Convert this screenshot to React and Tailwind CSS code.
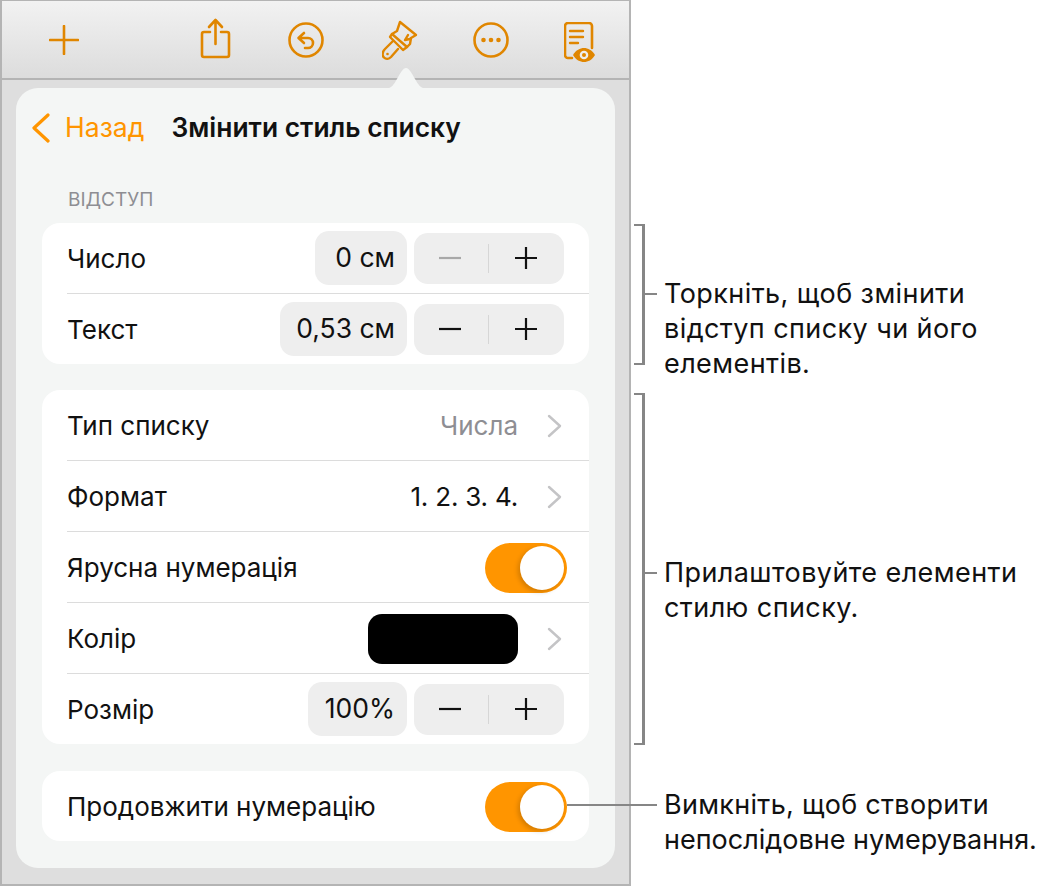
const ORANGE = "#e08600";

const Minus = ({ dim }) => (
  <svg className="mr-[2px]" width="24" height="24" viewBox="0 0 24 24">
    <path d="M1 12h22" stroke={dim ? "#a8a8a8" : "#111"} strokeWidth="2.2" fill="none" />
  </svg>
);

const Plus = () => (
  <svg className="mr-[2px]" width="24" height="24" viewBox="0 0 24 24">
    <path d="M1 12h22M12 1v22" stroke="#111" strokeWidth="2.2" fill="none" />
  </svg>
);

const Chevron = () => (
  <svg className="ml-[29px] mr-[2px] mt-[2px] shrink-0" width="15" height="24" viewBox="0 0 15 24">
    <path d="M2 2l11 10L2 22" stroke="#c4c4c6" strokeWidth="2.4" fill="none" strokeLinecap="round" strokeLinejoin="round" />
  </svg>
);

const Stepper = ({ dim }) => (
  <div className="w-[150px] h-[51px] rounded-[14px] bg-[#eeeeee] flex items-center">
    <div className="w-[75px] h-[29px] flex items-center justify-center border-r border-[#d6d6d6]">
      <Minus dim={dim} />
    </div>
    <div className="flex-1 flex items-center justify-center">
      <Plus />
    </div>
  </div>
);

const ValueBox = ({ width, children }) => (
  <div className={`${width} h-[54px] rounded-[14px] bg-[#eeeeee] flex items-center justify-end pr-3 mr-[7px] text-[26.5px] text-[#111]`}>
    {children}
  </div>
);

const Toggle = () => (
  <div className="relative w-[82px] h-[50px] -mr-[3px] mt-[2px] rounded-full bg-[#ff9500]">
    <div className="absolute right-[3px] top-[3px] w-[44px] h-[44px] rounded-full bg-white shadow-[-2px_2px_5px_rgba(0,0,0,0.18)]" />
  </div>
);

const Row = ({ label, last, children }) => (
  <div className={`ml-[25px] pr-[25px] flex items-center justify-between ${last ? "h-[70px]" : "h-[71px] border-b border-[#dcdcdc]"}`}>
    <span className="text-[26px] text-[#111]">{label}</span>
    <div className="flex items-center">{children}</div>
  </div>
);

const Card = ({ className = "", children }) => (
  <div className={`bg-white rounded-[18px] overflow-hidden ${className}`}>{children}</div>
);

const Callout = ({ height, bracket, tickTop, textTop, lines }) => (
  <div className={`flex items-start ${height}`}>
    <div className={`w-[11px] ${bracket} border-y-2 border-r-[3px] border-[#868686] shrink-0`} />
    <div className={`w-[12px] h-[2px] bg-[#868686] shrink-0 ${tickTop}`} />
    <div className={`ml-[7px] text-[27px] leading-[35px] tracking-[0.42px] text-[#111] whitespace-nowrap ${textTop}`}>
      {lines.map((l) => (
        <div key={l}>{l}</div>
      ))}
    </div>
  </div>
);

const Toolbar = () => (
  <div className="h-[79px] shrink-0 flex items-start border-b-2 border-[#b4b4b4] bg-gradient-to-b from-[#f2f2f2] to-[#dcdcdc]">
    <svg className="ml-[47px] mt-[24px]" width="30" height="30" viewBox="0 0 30 30">
      <path d="M1 15h28M15 1v28" stroke={ORANGE} strokeWidth="2.600" fill="none" strokeLinecap="round" />
    </svg>
    <svg className="ml-[121px] mt-[17px]" width="31" height="41" viewBox="0 0 31 41" fill="none" stroke={ORANGE} strokeWidth="2.600" strokeLinecap="round" strokeLinejoin="round">
      <path d="M10 14H4a2 2 0 0 0-2 2v21a2 2 0 0 0 2 2h23a2 2 0 0 0 2-2V16a2 2 0 0 0-2-2h-6" />
      <path d="M15.500 26V3M9 9l6.500-7 6.500 7" />
    </svg>
    <svg className="ml-[57px] mt-[21px]" width="36" height="36" viewBox="0 0 36 36" fill="none" stroke={ORANGE} strokeWidth="2.600" strokeLinecap="round" strokeLinejoin="round">
      <circle cx="18" cy="18" r="16.500" />
      <path d="M16 11l-5.500 5 5.500 5M11 16h9a5 5 0 0 1 0 10h-3" />
    </svg>
    <svg className="ml-[58px] mt-[19px]" width="38" height="42" viewBox="0 0 38 42" fill="none" stroke={ORANGE} strokeWidth="2.400" strokeLinecap="round" strokeLinejoin="round">
      <path d="M18 2L34 15L29 18L28 24L25 27L10 14L15 11Z" />
      <path d="M10 14L8 17L21 30L25 27" />
      <path d="M26 15L23 20L28 19" />
      <path d="M11 21L3 29C0 32 0 36 2 37.500C4 39.500 7 39 9 37L16 29" />
      <circle cx="5.500" cy="34" r="1.300" fill={ORANGE} stroke="none" />
    </svg>
    <svg className="ml-[53px] mt-[21px]" width="36" height="36" viewBox="0 0 36 36" fill="none">
      <circle cx="18" cy="18" r="16.500" stroke={ORANGE} strokeWidth="2.600" />
      <circle cx="10.500" cy="18" r="2.300" fill={ORANGE} />
      <circle cx="18" cy="18" r="2.300" fill={ORANGE} />
      <circle cx="25.500" cy="18" r="2.300" fill={ORANGE} />
    </svg>
    <svg className="ml-[55px] mt-[21px]" width="32" height="41" viewBox="0 0 32 41" fill="none">
      <path d="M8 36H4a3 3 0 0 1-3-3V4a3 3 0 0 1 3-3h21a3 3 0 0 1 3 3v22" stroke={ORANGE} strokeWidth="2.600" strokeLinecap="round" />
      <path d="M6 9h13M6 15h13M6 21h8" stroke={ORANGE} strokeWidth="2.400" strokeLinecap="round" />
      <path d="M9 33c3-5 7-7 11-7s8 2 11 7c-3 5-7 7-11 7s-8-2-11-7z" fill={ORANGE} />
      <circle cx="20" cy="33" r="4.300" fill="#eeeeee" />
      <circle cx="20" cy="33" r="2" fill={ORANGE} />
    </svg>
  </div>
);

const Popover = () => (
  <div className="relative mt-[8px] mx-[14px] h-[780px] rounded-[22px] bg-[#f4f6f5] px-[26px]">
    <svg className="absolute left-[367px] -top-[21px]" width="46" height="22" viewBox="0 0 46 22">
      <path d="M0 22C9 22 11 17 14 12C18 5 20 1 23 1C26 1 28 5 32 12C35 17 37 22 46 22Z" fill="#f4f6f5" />
    </svg>
    <div className="h-[80px] flex items-center">
      <svg className="-ml-[11px]" width="20" height="30" viewBox="0 0 20 30">
        <path d="M17 2L3 15l14 13" stroke="#ff9500" strokeWidth="3.200" fill="none" strokeLinecap="round" strokeLinejoin="round" />
      </svg>
      <span className="ml-[14px] text-[26.6px] text-[#ff9500]">Назад</span>
      <span className="ml-[27px] text-[26.4px] font-semibold text-[#111]">Змінити стиль списку</span>
    </div>
    <div className="h-[55px] pt-[21px] pl-[26px] text-[19px] leading-[22px] text-[#8e8e93]">ВІДСТУП</div>
    <Card>
      <Row label="Число">
        <ValueBox width="w-[92px]">0 см</ValueBox>
        <Stepper dim />
      </Row>
      <Row label="Текст" last>
        <ValueBox width="w-[127px]">0,53 см</ValueBox>
        <Stepper />
      </Row>
    </Card>
    <Card className="mt-[26px]">
      <Row label="Тип списку">
        <span className="text-[26px] text-[#8e8e93]">Числа</span>
        <Chevron />
      </Row>
      <Row label="Формат">
        <span className="text-[26px] tracking-[-0.2px] text-[#111]">1. 2. 3. 4.</span>
        <Chevron />
      </Row>
      <Row label="Ярусна нумерація">
        <Toggle />
      </Row>
      <Row label="Колір">
        <div className="w-[150px] h-[50px] mt-[2px] rounded-[14px] bg-black" />
        <Chevron />
      </Row>
      <Row label="Розмір" last>
        <ValueBox width="w-[99px]">100%</ValueBox>
        <Stepper />
      </Row>
    </Card>
    <Card className="mt-[27px]">
      <Row label="Продовжити нумерацію" last>
        <Toggle />
      </Row>
    </Card>
  </div>
);

export default function App() {
  return (
    <div className="flex w-[1043px] h-[886px] overflow-hidden bg-white font-['Inter',sans-serif]">
      <div className="w-[631px] h-[886px] shrink-0 flex flex-col border-x-2 border-b-2 border-t border-[#b4b4b4] bg-[#dedede]">
        <Toolbar />
        <Popover />
      </div>
      <div className="ml-[3px] flex-1 flex flex-col">
        <div className="h-[224px]" />
        <Callout height="h-[169px]" bracket="h-[141px]" tickTop="mt-[69px]" textTop="mt-[52px]" lines={["Торкніть, щоб змінити", "відступ списку чи його", "елементів."]} />
        <Callout height="h-[399px]" bracket="h-[352px]" tickTop="mt-[179px]" textTop="mt-[162px]" lines={["Прилаштовуйте елементи", "стилю списку."]} />
        <div className="flex items-start">
          <div className="relative z-10 -ml-[67px] mt-[12px] w-[90px] h-[2px] bg-[#868686] shrink-0" />
          <div className="ml-[7px] -mt-[5px] text-[27px] leading-[35px] text-[#111] whitespace-nowrap">
            <div className="tracking-[0.3px]">Вимкніть, щоб створити</div>
            <div>непослідовне нумерування.</div>
          </div>
        </div>
      </div>
    </div>
  );
}
